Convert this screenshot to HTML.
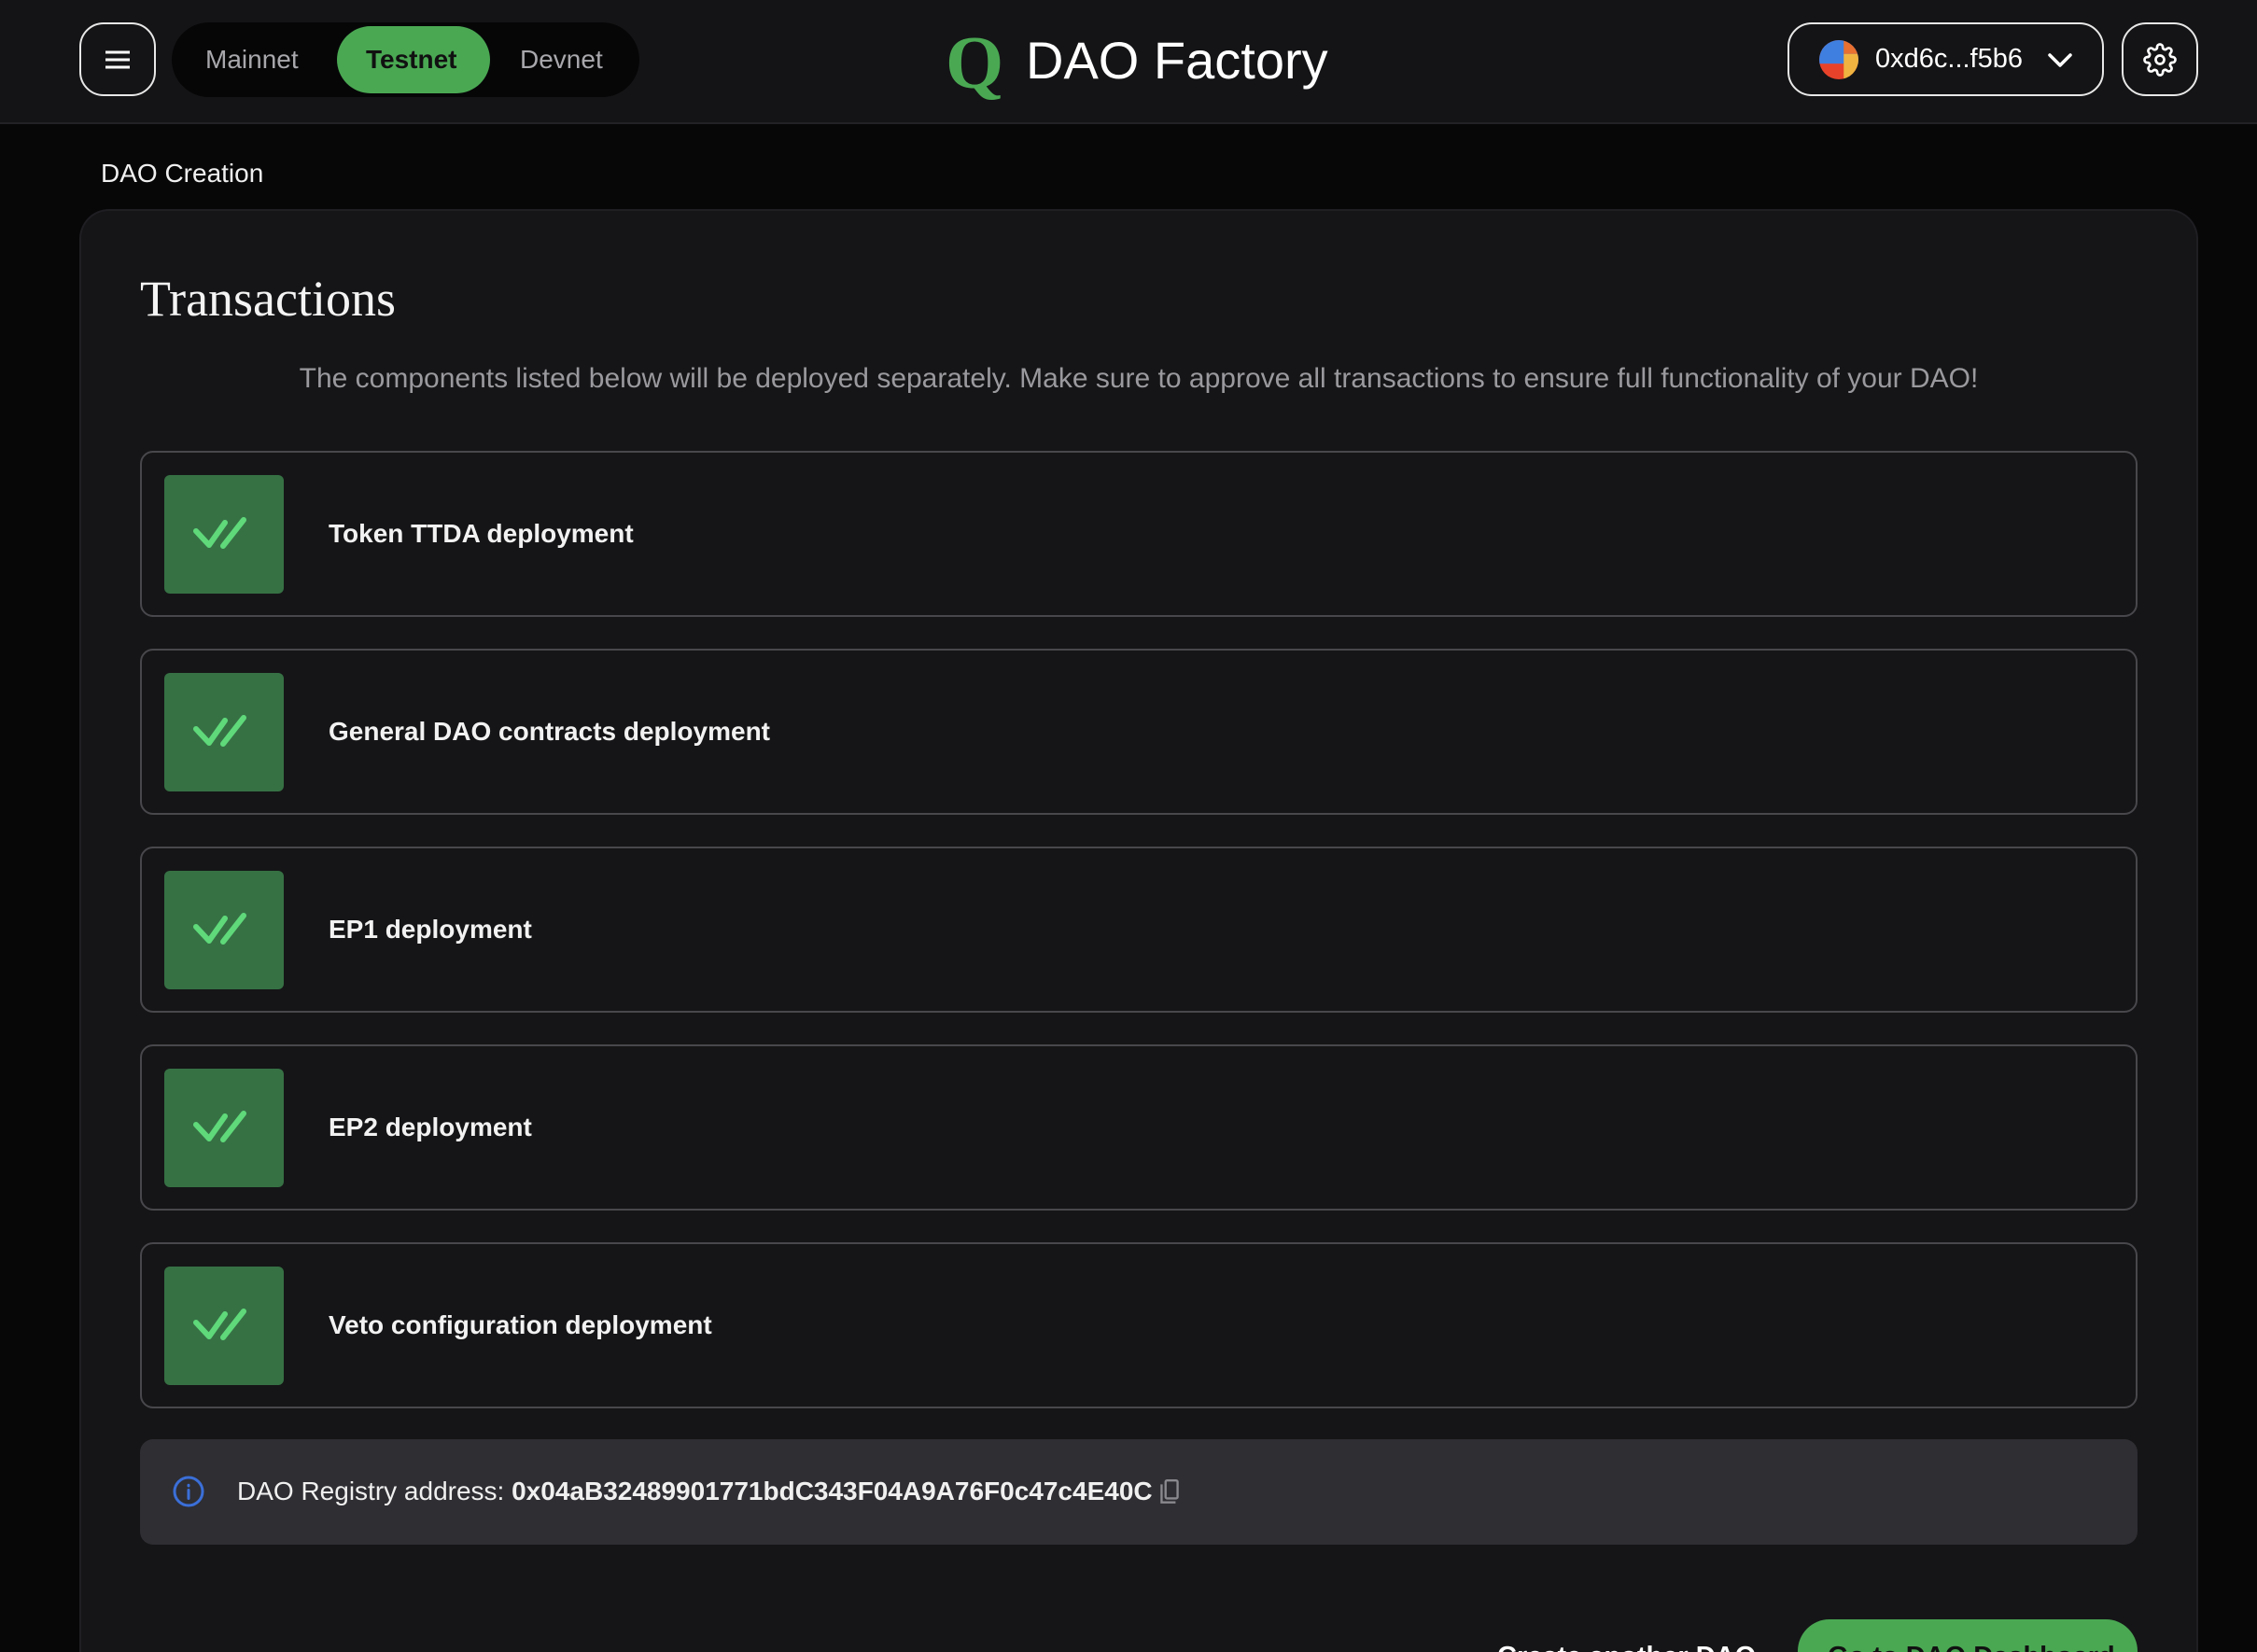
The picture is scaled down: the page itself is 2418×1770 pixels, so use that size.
<!DOCTYPE html>
<html><head><meta charset="utf-8"><style>
*{box-sizing:border-box;margin:0;padding:0}
html,body{width:2418px;height:1770px;overflow:hidden}
body{background:#070708;font-family:"Liberation Sans","DejaVu Sans",sans-serif;color:#fff;position:relative}
.hdr{position:absolute;left:0;top:0;width:2418px;height:133px;background:#141416;border-bottom:2px solid #222226}
.abs{position:absolute}
.btn{border:2px solid #e8e8e8;border-radius:26px;display:flex;align-items:center;justify-content:center}
.card{position:absolute;left:85px;top:224px;width:2270px;height:1546px;background:#151517;border:2px solid #1f1f23;border-bottom:none;border-radius:32px 32px 0 0}
.row{position:absolute;left:150px;width:2140px;height:178px;border:2px solid #48484c;border-radius:14px}
.chk{position:absolute;left:24px;top:24px;width:128px;height:127px;background:#367144;border-radius:6px;display:flex;align-items:center;justify-content:center}
.row span{position:absolute;left:200px;top:0;line-height:174px;font-size:28px;font-weight:bold;color:#f2f2f2}
</style></head><body>
<div class="hdr"></div>
<div class="abs btn" style="left:85px;top:24px;width:82px;height:79px">
<svg width="30" height="24" viewBox="0 0 30 24"><path d="M2 4h26M2 12h26M2 20h26" stroke="#fff" stroke-width="3"/></svg></div>
<div class="abs" style="left:184px;top:24px;width:501px;height:80px;background:#060607;border-radius:40px"></div>
<div class="abs" style="left:361px;top:28px;width:164px;height:72px;background:#4aa853;border-radius:36px"></div>
<div class="abs" style="left:220px;top:24px;line-height:80px;font-size:28px;color:#a8a8ac">Mainnet</div>
<div class="abs" style="left:392px;top:24px;line-height:80px;font-size:28px;color:#111;font-weight:bold">Testnet</div>
<div class="abs" style="left:557px;top:24px;line-height:80px;font-size:28px;color:#a8a8ac">Devnet</div>
<div class="abs" style="left:1013px;top:28px;font-family:'Liberation Serif',serif;font-size:80px;line-height:80px;color:#4aa853;font-weight:bold">Q</div>
<div class="abs" style="left:1099px;top:30px;font-size:56px;line-height:70px;color:#fff">DAO Factory</div>
<div class="abs btn" style="left:1915px;top:24px;width:339px;height:79px;justify-content:flex-start;padding-left:32px">
<svg width="42" height="42" viewBox="0 0 40 40"><defs><clipPath id="c"><circle cx="20" cy="20" r="20"/></clipPath></defs><g clip-path="url(#c)"><rect width="40" height="40" fill="#e8432a"/><rect width="40" height="24" fill="#3f7fe0"/><rect x="25" y="14" width="15" height="26" fill="#f0b340"/><rect x="25" y="0" width="15" height="14" fill="#e87030"/></g></svg>
<span style="font-size:29px;margin-left:18px">0xd6c...f5b6</span>
<svg style="margin-left:26px" width="28" height="18" viewBox="0 0 28 18"><path d="M3 4l11 11L25 4" stroke="#fff" stroke-width="3.5" fill="none" stroke-linecap="round" stroke-linejoin="round"/></svg></div>
<div class="abs btn" style="left:2273px;top:24px;width:82px;height:79px">
<svg width="36" height="36" viewBox="0 0 24 24" fill="none" stroke="#fff" stroke-width="1.8"><circle cx="12" cy="12" r="3"/><path d="M19.4 15a1.65 1.65 0 0 0 .33 1.82l.06.06a2 2 0 1 1-2.830 2.83l-.06-.06a1.65 1.65 0 0 0-1.82-.33 1.65 1.65 0 0 0-1 1.51V21a2 2 0 1 1-4 0v-.09A1.65 1.65 0 0 0 9 19.4a1.65 1.65 0 0 0-1.82.33l-.06.06a2 2 0 1 1-2.83-2.83l.06-.06a1.65 1.65 0 0 0 .33-1.82 1.65 1.65 0 0 0-1.51-1H3a2 2 0 1 1 0-4h.09A1.65 1.65 0 0 0 4.6 9a1.65 1.65 0 0 0-.33-1.82l-.06-.06a2 2 0 1 1 2.83-2.83l.06.06a1.65 1.65 0 0 0 1.82.33H9a1.65 1.65 0 0 0 1-1.51V3a2 2 0 1 1 4 0v.09a1.65 1.65 0 0 0 1 1.51 1.65 1.65 0 0 0 1.82-.33l.06-.06a2 2 0 1 1 2.83 2.83l-.06.06a1.65 1.65 0 0 0-.33 1.82V9a1.65 1.65 0 0 0 1.51 1H21a2 2 0 1 1 0 4h-.09a1.65 1.65 0 0 0-1.51 1z"/></svg></div>
<div class="abs" style="left:108px;top:166px;font-size:28px;line-height:40px;color:#f0f0f0">DAO Creation</div>
<div class="card"></div>
<div class="abs" style="left:150px;top:288px;font-family:'Liberation Serif',serif;font-size:54px;line-height:64px;color:#f4f4f4">Transactions</div>
<div class="abs" style="left:150px;top:386px;width:2140px;text-align:center;font-size:30px;line-height:40px;color:#9a9a9e;white-space:nowrap">The components listed below will be deployed separately. Make sure to approve all transactions to ensure full functionality of your DAO!</div>
<div class="row" style="top:483px"><div class="chk"><svg width="70" height="44" viewBox="0 0 70 44"><path d="M5 18l14 15L36 9M34 34L56 6" stroke="#5fd97a" stroke-width="6" fill="none" stroke-linecap="round" stroke-linejoin="round"/></svg></div><span>Token TTDA deployment</span></div>
<div class="row" style="top:695px"><div class="chk"><svg width="70" height="44" viewBox="0 0 70 44"><path d="M5 18l14 15L36 9M34 34L56 6" stroke="#5fd97a" stroke-width="6" fill="none" stroke-linecap="round" stroke-linejoin="round"/></svg></div><span>General DAO contracts deployment</span></div>
<div class="row" style="top:907px"><div class="chk"><svg width="70" height="44" viewBox="0 0 70 44"><path d="M5 18l14 15L36 9M34 34L56 6" stroke="#5fd97a" stroke-width="6" fill="none" stroke-linecap="round" stroke-linejoin="round"/></svg></div><span>EP1 deployment</span></div>
<div class="row" style="top:1119px"><div class="chk"><svg width="70" height="44" viewBox="0 0 70 44"><path d="M5 18l14 15L36 9M34 34L56 6" stroke="#5fd97a" stroke-width="6" fill="none" stroke-linecap="round" stroke-linejoin="round"/></svg></div><span>EP2 deployment</span></div>
<div class="row" style="top:1331px"><div class="chk"><svg width="70" height="44" viewBox="0 0 70 44"><path d="M5 18l14 15L36 9M34 34L56 6" stroke="#5fd97a" stroke-width="6" fill="none" stroke-linecap="round" stroke-linejoin="round"/></svg></div><span>Veto configuration deployment</span></div>
<div class="abs" style="left:150px;top:1542px;width:2140px;height:113px;background:#2e2e33;border-radius:14px"></div>
<svg class="abs" style="left:184px;top:1580px" width="36" height="36" viewBox="0 0 24 24" fill="none" stroke="#3b6fd8" stroke-width="2"><circle cx="12" cy="12" r="10"/><path d="M12 11v6M12 7.5v.5" stroke-linecap="round"/></svg>
<div class="abs" style="left:254px;top:1578px;font-size:28px;line-height:40px;color:#f0f0f0">DAO Registry address: <b style="font-weight:600">0x04aB32489901771bdC343F04A9A76F0c47c4E40C</b></div>
<svg class="abs" style="left:1240px;top:1584px" width="26" height="30" viewBox="0 0 24 28" fill="none" stroke="#8a8a8e" stroke-width="2.2"><path d="M4 6v18h14"/><rect x="8" y="2" width="12" height="18" rx="1.5"/></svg>
<div class="abs" style="left:1604px;top:1758px;font-size:29px;line-height:34px;font-weight:bold;color:#fff">Create another DAO</div>
<div class="abs" style="left:1926px;top:1735px;width:364px;height:90px;background:#4aa853;border-radius:34px"></div>
<div class="abs" style="left:1958px;top:1758px;font-size:29px;line-height:34px;font-weight:bold;color:#111">Go to DAO Dashboard</div>
</body></html>
